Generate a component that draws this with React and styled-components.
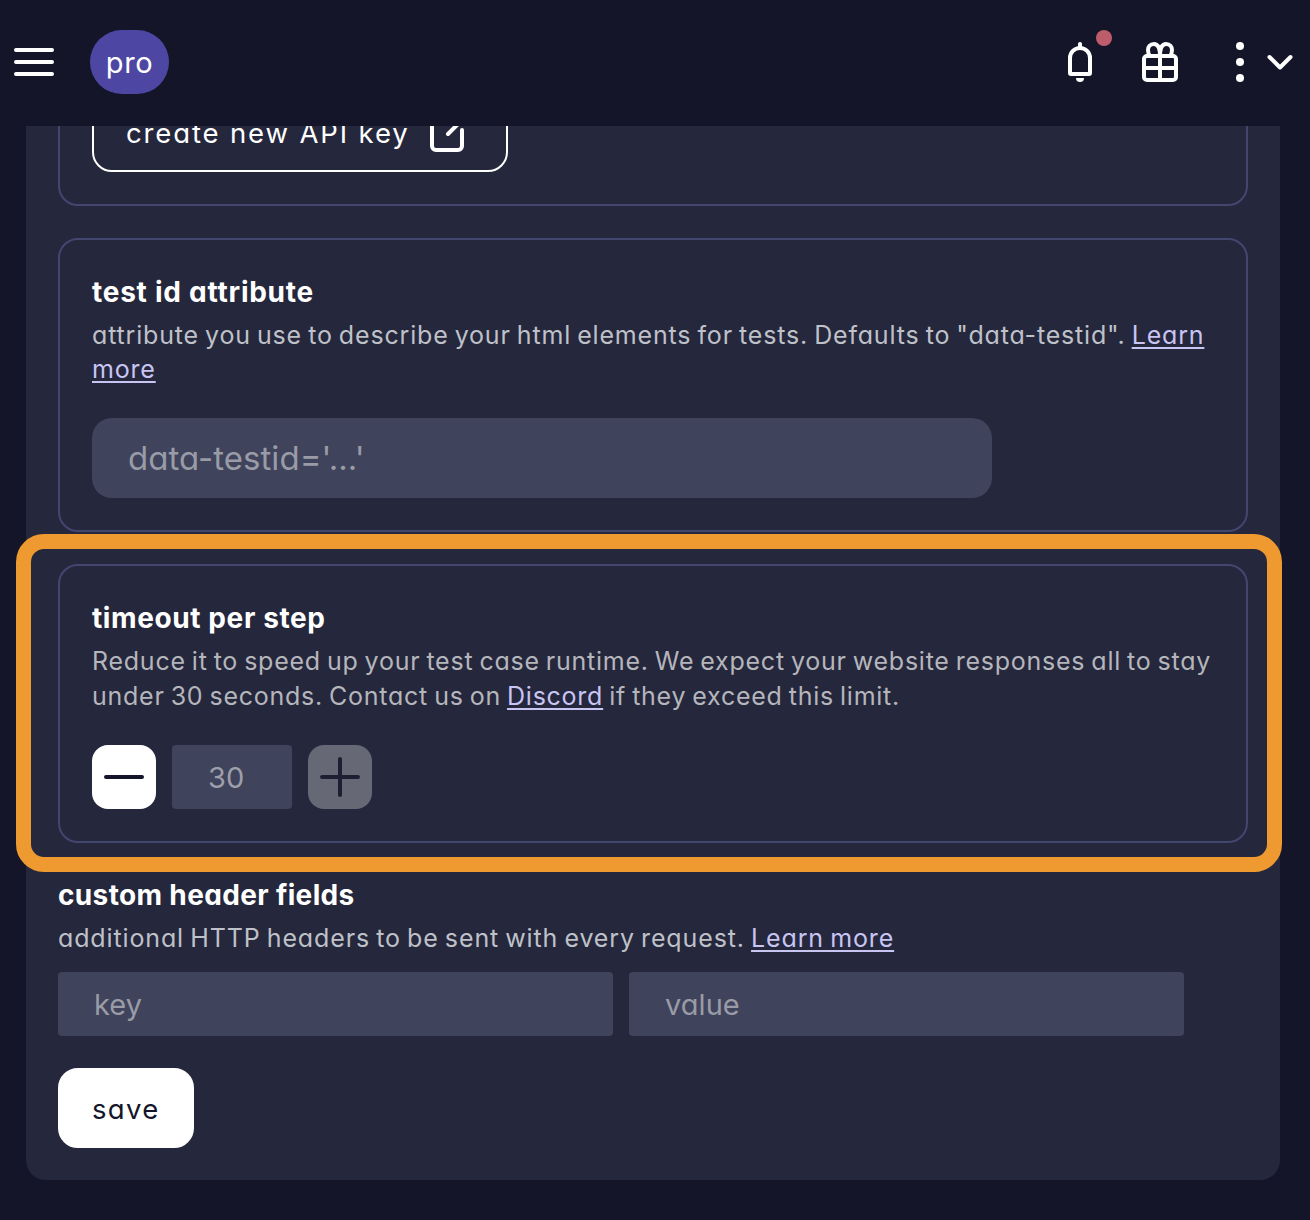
import React from "react";
import styled, { createGlobalStyle } from "styled-components";

const GlobalStyle = createGlobalStyle`
  * { box-sizing: border-box; }
  body {
    margin: 0;
    background: #141528;
    color: #fff;
    font-family: Inter, Lato, sans-serif;
    font-feature-settings: "cv11";
  }
  button, input { font: inherit; font-feature-settings: inherit; }
`;

const Page = styled.div`
  position: relative;
  height: 1220px;
  overflow: hidden;
`;

const Header = styled.header`
  display: flex;
  align-items: center;
  justify-content: space-between;
  height: 126px;
  padding: 0 10px 2px 14px;
`;

const HeaderGroup = styled.div`
  display: flex;
  align-items: center;
`;

const Icon = styled.svg.attrs({ viewBox: "0 0 40 40", fill: "none" })`
  display: block;
  flex: none;
  width: 40px;
  height: 40px;
  overflow: visible;
  stroke: currentColor;
  stroke-width: 4;
  stroke-linecap: round;
  stroke-linejoin: round;
`;

const IconButton = styled.button`
  position: relative;
  display: block;
  padding: 0;
  margin-right: ${(p) => p.$gap || 0}px;
  border: 0;
  background: none;
  color: #fff;
`;

const Dot = styled.span`
  position: absolute;
  top: -12px;
  right: -12px;
  width: 16px;
  height: 16px;
  border-radius: 50%;
  background: #bd5d6b;
`;

const PlanBadge = styled.span`
  display: flex;
  align-items: center;
  justify-content: center;
  width: 79px;
  height: 64px;
  border-radius: 32px;
  background: #4d47a3;
  font-size: 29px;
  font-weight: 400;
  letter-spacing: 0.6px;
`;

const Viewport = styled.main`
  height: 1054px;
  padding: 0 30px 0 26px;
  overflow: hidden;
`;

const Panel = styled.div`
  display: flex;
  flex-direction: column;
  gap: 32px;
  height: 1122px;
  margin-top: -68px;
  padding: 0 32px;
  border-radius: 20px;
  background: #25273d;
`;

const Card = styled.section`
  padding: 32px;
  border: 2px solid #43466f;
  border-radius: 20px;
`;

const Plain = styled.section``;

const Title = styled.h2`
  height: 46px;
  margin: 0;
  font-size: 28px;
  font-weight: 700;
  line-height: 40px;
  letter-spacing: ${(p) => p.$tracking}px;
`;

const Description = styled.p`
  margin: 0 -10px ${(p) => p.$space || 32}px 0;
  color: ${(p) => p.$tone || "#bfc1c8"};
  font-size: 25px;
  font-weight: 400;
  line-height: 34.2px;
  letter-spacing: ${(p) => p.$tracking}px;
  word-spacing: -1.7px;
`;

const Link = styled.a`
  color: #c8c5f2;
  text-decoration: underline;
  text-decoration-thickness: 2px;
  text-underline-offset: 3px;
`;

const Field = styled.input`
  display: block;
  width: ${(p) => p.$width}px;
  height: ${(p) => (p.$large ? 80 : 64)}px;
  padding: ${(p) => (p.$large ? 0 : 1)}px 0 0 36px;
  border: 0;
  border-radius: ${(p) => (p.$large ? 20 : 4)}px;
  background: #3f435b;
  color: #9d9fa9;
  font-size: ${(p) => (p.$large ? 33 : 29)}px;
  font-weight: 400;
  letter-spacing: ${(p) => (p.$large ? 0.05 : 0.05)}px;
  &::placeholder { color: #999ba6; opacity: 1; }
`;

const Row = styled.div`
  display: flex;
  gap: 16px;
`;

const StepButton = styled.button`
  display: flex;
  align-items: center;
  justify-content: center;
  width: 64px;
  height: 64px;
  padding: 0;
  border: 0;
  border-radius: 16px;
  background: #fff;
  color: #14152a;
  &:disabled { background: #676876; color: #1e1f33; }
`;

const Button = styled.button`
  display: flex;
  align-items: center;
  gap: 18px;
  height: 80px;
  padding: 2px 32px 0;
  border: 2px solid #fff;
  border-radius: 20px;
  background: ${(p) => (p.$outline ? "transparent" : "#fff")};
  color: ${(p) => (p.$outline ? "#fff" : "#14152a")};
  width: ${(p) => p.$width}px;
  font-size: 27.5px;
  font-weight: 400;
  letter-spacing: ${(p) => (p.$outline ? 1.86 : 1.3)}px;
  white-space: nowrap;
  ${Icon} { margin-top: -2px; }
`;

const Highlight = styled.div`
  position: absolute;
  left: 16px;
  top: 534px;
  width: 1266px;
  height: 338px;
  border: 15px solid #ee9a30;
  border-radius: 28px;
  pointer-events: none;
`;

const MenuIcon = () => (
  <Icon><path d="M2 8H38M2 20H38M2 32H38" /></Icon>
);

const BellIcon = () => (
  <Icon>
    <path d="M20 2V6" />
    <path d="M10 31V16a10 10 0 0 1 20 0V31a1 1 0 0 1-1 1H11a1 1 0 0 1-1-1Z" />
    <path d="M16 36h8a4 4 0 0 1-8 0Z" fill="currentColor" stroke="none" />
  </Icon>
);

const GiftIcon = () => (
  <Icon>
    <rect x="4" y="14" width="32" height="24" rx="3" />
    <path d="M4 26H36M20 14V38" />
    <path d="M20 14C20 6 18 2 14 2C10 2 8 5 8 8C8 11 9 13 10 14M20 14C20 6 22 2 26 2C30 2 32 5 32 8C32 11 31 13 30 14" />
  </Icon>
);

const MoreIcon = () => (
  <Icon>
    <g fill="currentColor" stroke="none">
      <circle cx="20" cy="4" r="4" />
      <circle cx="20" cy="20" r="4" />
      <circle cx="20" cy="36" r="4" />
    </g>
  </Icon>
);

const ChevronIcon = () => (
  <Icon><path d="M9.5 15L20 25.5L30.5 15" /></Icon>
);

const ExternalIcon = () => (
  <Icon>
    <path d="M17 6H8a4 4 0 0 0-4 4V34a4 4 0 0 0 4 4H30a4 4 0 0 0 4-4V18" />
    <path d="M20 22L38 4M27 2H38V9" />
  </Icon>
);

export default function App() {
  return (
    <>
      <GlobalStyle />
      <Page>
        <Header>
          <HeaderGroup>
            <IconButton $gap={36}><MenuIcon /></IconButton>
            <PlanBadge>pro</PlanBadge>
          </HeaderGroup>
          <HeaderGroup>
            <IconButton $gap={40}><BellIcon /><Dot /></IconButton>
            <IconButton $gap={40}><GiftIcon /></IconButton>
            <IconButton><MoreIcon /></IconButton>
            <IconButton><ChevronIcon /></IconButton>
          </HeaderGroup>
        </Header>
        <Viewport>
          <Panel>
            <Card>
              <Button $outline $width={416}>create new API key <ExternalIcon /></Button>
            </Card>
            <Card>
              <Title $tracking={0.75}>test id attribute</Title>
              <Description $tracking={0.82}>
                attribute you use to describe your html elements for tests. Defaults to "data-testid". <Link>Learn more</Link>
              </Description>
              <Field $large $width={900} placeholder="data-testid='...'" />
            </Card>
            <Card>
              <Title $tracking={0.6}>timeout per step</Title>
              <Description $tone="#b5b6bb" $tracking={0.75}>
                Reduce it to speed up your test case runtime. We expect your website responses all to stay under 30 seconds. Contact us on <Link>Discord</Link> if they exceed this limit.
              </Description>
              <Row>
                <StepButton><Icon><path d="M2 20H38" /></Icon></StepButton>
                <Field $width={120} defaultValue="30" />
                <StepButton disabled><Icon><path d="M2 20H38M20 2V38" /></Icon></StepButton>
              </Row>
            </Card>
            <Plain>
              <Title $tracking={0.35}>custom header fields</Title>
              <Description $space={17} $tracking={0.87}>
                additional HTTP headers to be sent with every request. <Link>Learn more</Link>
              </Description>
              <Row>
                <Field $width={555} placeholder="key" />
                <Field $width={555} placeholder="value" />
              </Row>
            </Plain>
            <Button $width={136}>save</Button>
          </Panel>
        </Viewport>
        <Highlight />
      </Page>
    </>
  );
}
